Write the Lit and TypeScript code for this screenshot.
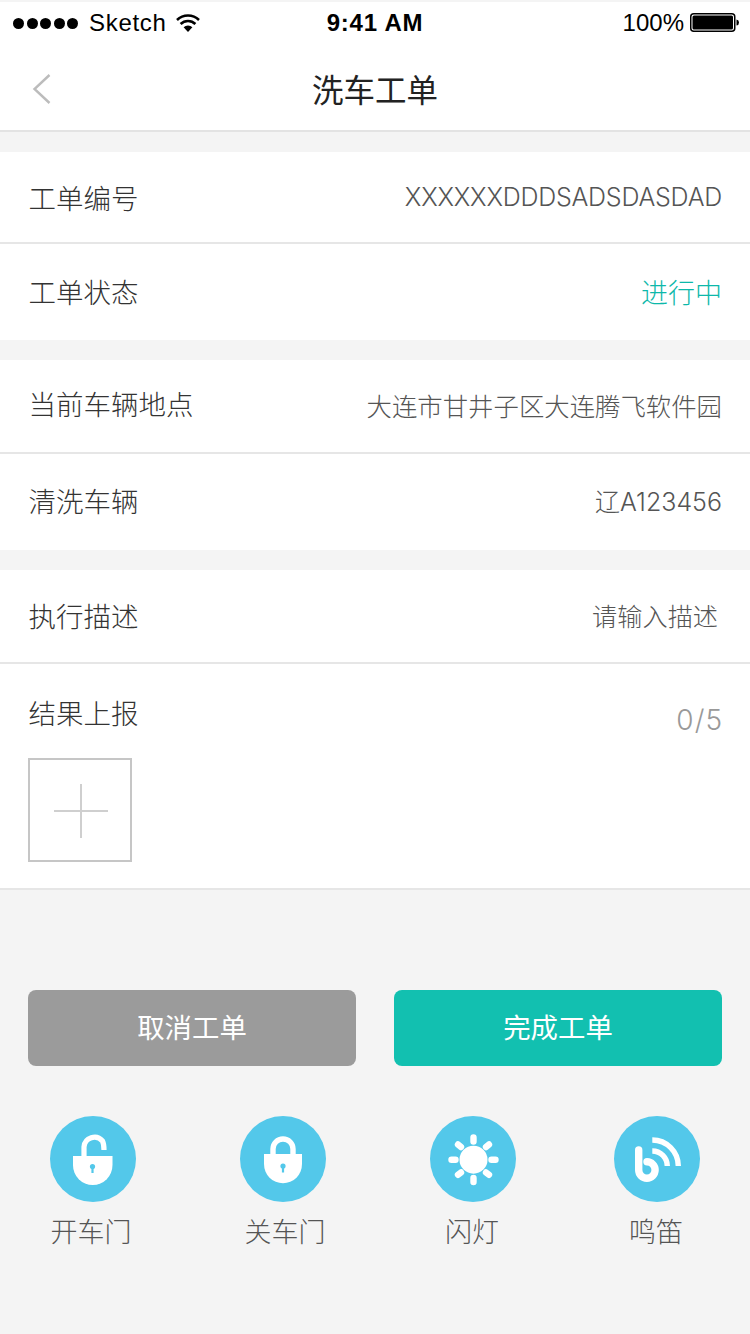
import { LitElement, html, css } from "lit";
import { customElement } from "lit/decorators.js";

@customElement("app-root")
export class AppRoot extends LitElement {
  static styles = css`
    :host { display: block; width: 750px; height: 1334px; background: #f4f4f4; overflow: hidden;
      font-family: "Liberation Sans", "Noto Sans CJK SC", sans-serif; color: #333; }
    .cjk { font-family: "Noto Sans CJK SC", sans-serif; font-weight: 300; }
    .top { background: #fff; margin-top: 2px; height: 128px; border-bottom: 2px solid #e3e3e3; }
    .status { height: 42px; display: grid; grid-template-columns: 1fr auto 1fr; align-items: center; color: #000; font-size: 24px; padding: 0 10px 0 13px; }
    .s-left { display: flex; align-items: center; }
    .dots { display: flex; gap: 2.5px; margin-right: 11px; }
    .dots i { width: 11px; height: 11px; background: #000; border-radius: 50%; display: block; }
    .sketch { letter-spacing: .7px; margin-right: 8px; }
    .time { font-weight: 700; letter-spacing: .8px; margin-left: -3px; }
    .s-right { display: flex; justify-content: flex-end; align-items: center; gap: 6px; }
    svg { display: block; }
    .nav { height: 84px; display: grid; grid-template-columns: 1fr auto 1fr; align-items: center; padding: 2px 32px 0; }
    .chev { margin-top: 2px; }
    .title { font-size: 31.5px; color: #222; font-weight: 400; }
    .section { background: #fff; margin-top: 20px; }
    .row { display: flex; justify-content: space-between; align-items: center; padding: 0 28px 0 28.5px; font-size: 27.5px; color: #333; }
    .line { border-bottom: 2px solid #e6e6e6; }
    .h90 { height: 90px; }
    .h96 { height: 94px; padding-bottom: 2px; }
    .h96b { height: 92px; padding-bottom: 4px; }
    .h92 { height: 90px; padding-bottom: 2px; }
    .up { margin-bottom: 4px; }
    .val { font-family: "Inter", "Noto Sans CJK SC", sans-serif; font-size: 25.4px; color: #555; }
    .plate { font-size: 25px; }
    .latin { font-family: "Inter", sans-serif; font-weight: 300; font-size: 25px; color: #555; letter-spacing: -.23px; }
    .teal { color: #0db8aa; font-size: 27px; }
    .input { font-size: 25.2px; color: #555; margin-right: 4px; }
    .report { height: 226px; padding: 29px 28px 0 28.5px; box-sizing: border-box; border-bottom: 2px solid #e6e6e6; }
    .report-head { display: flex; justify-content: space-between; height: 38px; line-height: 38px; font-size: 27.5px; color: #333; }
    .count { font-family: "Inter", sans-serif; font-size: 28px; line-height: 32px; letter-spacing: 1px; color: #999; margin-top: 11px; margin-right: -1px; }
    .add { width: 104px; height: 104px; box-sizing: border-box; border: 2px solid #c6c6c6; padding: 2px 0 0 1px; margin-top: 27px; margin-left: -.5px; display: flex; align-items: center; justify-content: center; }
    .btns { display: flex; justify-content: space-between; margin: 100px 28px 0; }
    .btn { width: 328px; height: 76px; box-sizing: border-box; padding-bottom: 4px; border-radius: 8px; color: #fff; font-size: 27.4px; font-weight: 400; display: flex; align-items: center; justify-content: center; }
    .gray { background: #9b9b9b; }
    .green { background: #12c0b0; }
    .actions { display: flex; margin-top: 50px; padding-left: 50px; }
    .act { width: 86px; display: flex; flex-direction: column; align-items: center; margin-right: 104px; white-space: nowrap; }
    .act.last { margin-right: 98px; }
    .circle { width: 86px; height: 86px; border-radius: 50%; background: #53c8ea; }
    .lbl { font-size: 27px; color: #555; margin-top: 9px; }
    .sl { margin-right: 4px; }
    .sr { margin-left: 4px; }
    .sm { margin-right: 2px; }
  `;

  render() {
    return html`
      <div class="top">
        <div class="status">
          <div class="s-left">
            <div class="dots"><i></i><i></i><i></i><i></i><i></i></div>
            <span class="sketch">Sketch</span>
            <svg width="26" height="18" viewBox="0 0 26 18"><path d="M13 18 L8.6 13.2 A6.4 6.4 0 0 1 17.4 13.2Z" fill="#000"/><path d="M5.6 10 A10.6 10.6 0 0 1 20.4 10" fill="none" stroke="#000" stroke-width="2.6"/><path d="M2 6 A15.8 15.8 0 0 1 24 6" fill="none" stroke="#000" stroke-width="2.6"/></svg>
          </div>
          <div class="time">9:41 AM</div>
          <div class="s-right">
            <span>100%</span>
            <svg width="50" height="20" viewBox="0 0 50 20"><rect x=".75" y=".75" width="44" height="17.5" rx="3" fill="#fff" stroke="#000" stroke-width="1.5"/><rect x="2.5" y="2.5" width="40.5" height="14" rx="1.5" fill="#000"/><path d="M46.5 6.5 a3 3 0 0 1 2.5 3 a3 3 0 0 1 -2.5 3z" fill="#000"/></svg>
          </div>
        </div>
        <div class="nav">
          <svg class="chev" width="20" height="32" viewBox="0 0 20 32"><path d="M17.5 2 L2.5 16 L17.5 30" fill="none" stroke="#bcbcbc" stroke-width="2.4"/></svg>
          <div class="title cjk">洗车工单</div>
        </div>
      </div>

      <div class="section">
        <div class="row line h90 cjk"><span>工单编号</span><span class="latin">XXXXXXDDDSADSDASDAD</span></div>
        <div class="row h96 cjk"><span>工单状态</span><span class="teal">进行中</span></div>
      </div>
      <div class="section">
        <div class="row line h92 cjk"><span class="up">当前车辆地点</span><span class="val">大连市甘井子区大连腾飞软件园</span></div>
        <div class="row h96b cjk"><span>清洗车辆</span><span class="val plate">辽A123456</span></div>
      </div>
      <div class="section">
        <div class="row line h92 cjk"><span>执行描述</span><span class="input">请输入描述</span></div>
        <div class="report cjk">
          <div class="report-head"><span>结果上报</span><span class="count">0/5</span></div>
          <div class="add">
            <svg width="54" height="54" viewBox="0 0 54 54"><path d="M0 27H54M27 0V54" stroke="#cfcfcf" stroke-width="2"/></svg>
          </div>
        </div>
      </div>

      <div class="btns cjk">
        <div class="btn gray">取消工单</div>
        <div class="btn green">完成工单</div>
      </div>

      <div class="actions cjk">
        <div class="act">
          <div class="circle">
            <svg width="86" height="86" viewBox="0 0 86 86">
              <path d="M34 40 V31 A10.5 10.5 0 0 1 52.5 25 Q54 28 54 34" fill="none" stroke="#fff" stroke-width="5.2"/>
              <path d="M23 40 H62.5 V49 A19.7 20 0 0 1 23 49Z" fill="#fff"/>
              <circle cx="42.5" cy="50.5" r="2.6" fill="#53c8ea"/><rect x="41.4" y="51" width="2.2" height="6" fill="#53c8ea"/>
            </svg>
          </div>
          <div class="lbl sl">开车门</div>
        </div>
        <div class="act">
          <div class="circle">
            <svg width="86" height="86" viewBox="0 0 86 86">
              <path d="M33 40 V33 A10 10 0 0 1 53 33 V40" fill="none" stroke="#fff" stroke-width="5.4"/>
              <path d="M24 38 H62 V48 A19 19.3 0 0 1 24 48Z" fill="#fff"/>
              <circle cx="43" cy="50" r="2.6" fill="#53c8ea"/><rect x="41.9" y="50.5" width="2.2" height="6" fill="#53c8ea"/>
            </svg>
          </div>
          <div class="lbl sr">关车门</div>
        </div>
        <div class="act last">
          <div class="circle">
            <svg width="86" height="86" viewBox="0 0 86 86">
              <circle cx="43.5" cy="43.7" r="14" fill="#fff"/>
              <g stroke="#fff" stroke-width="6.4" stroke-linecap="round">
                <path d="M43.5 21.5V25.5M43.5 62V66M21.5 43.7H25.5M61.5 43.7H65.5"/>
                <path d="M28 28.5L31 31M59 28.5L56 31M28 58.8L31 56.4M59 58.8L56 56.4"/>
              </g>
            </svg>
          </div>
          <div class="lbl sm">闪灯</div>
        </div>
        <div class="act">
          <div class="circle">
            <svg width="86" height="86" viewBox="0 0 86 86">
              <g fill="none" stroke="#fff" stroke-linecap="butt">
                <path d="M24.7 34V54 A8.2 8.2 0 1 0 33 45.8" stroke-width="7.4" stroke-linecap="round"/>
                <path d="M38.3 24 A26 26 0 0 1 64.3 50" stroke-width="5.4"/>
                <path d="M38.3 35 A15 15 0 0 1 53.3 50" stroke-width="5.4"/>
              </g>
            </svg>
          </div>
          <div class="lbl sm">鸣笛</div>
        </div>
      </div>
    `;
  }
}
